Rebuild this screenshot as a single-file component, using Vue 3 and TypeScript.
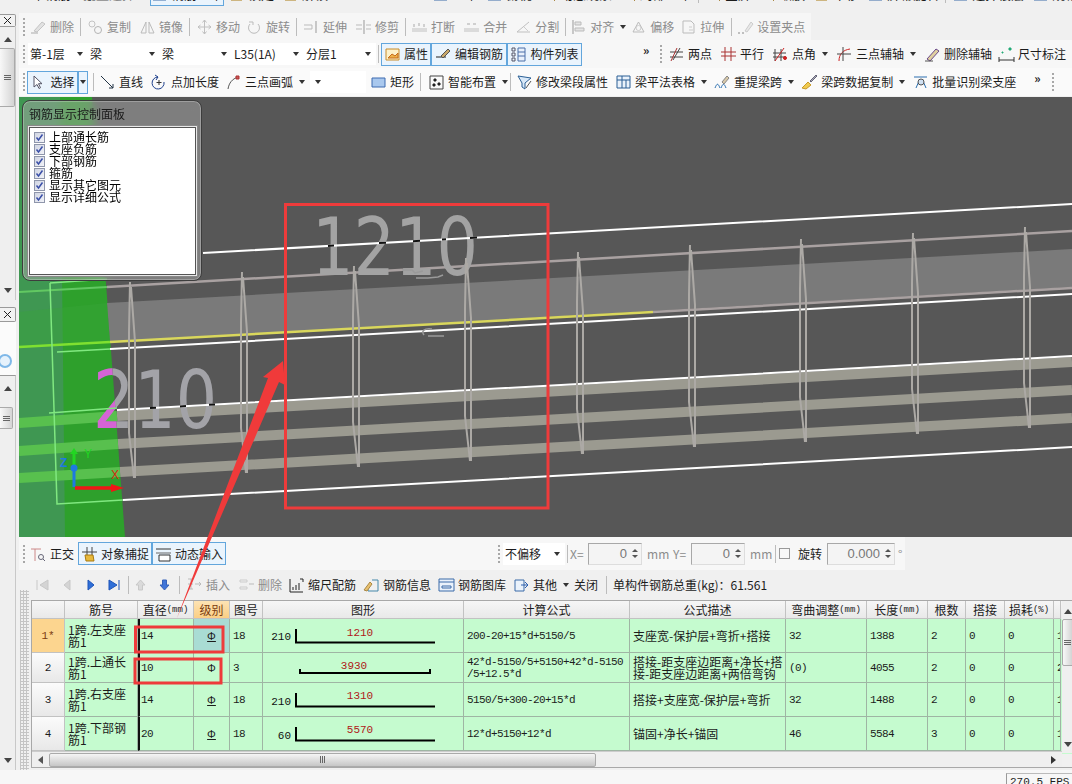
<script setup lang="ts">
type Shape = { d: string; s: string; f: string }
type Item = {
  k: 't' | 'tg' | 'sep' | 'grip' | 'sp' | 'sel' | 'more' | 'txt' | 'num' | 'chk' | 'nav'
  label?: string
  icon?: string
  caret?: boolean
  off?: boolean
  w?: number
}

const P = (d: string, s = '#777', f = 'none'): Shape => ({ d, s, f })
const ring = (x: number, y: number, r: number) => `M${x - r} ${y}a${r} ${r} 0 1 0 ${2 * r} 0a${r} ${r} 0 1 0 ${-2 * r} 0`

const icons: Record<string, Shape[]> = {
  erase: [P('M4 12 12 3l3 2-8 8z', '#c4c4c4', '#e2e2e2'), P('M1 14h7', '#aaa')],
  copy: [P(ring(5, 5, 3), '#c4c4c4'), P(ring(11, 11, 3.5), '#b4b4b4')],
  mirror: [P('M2 14 7 3v11z', '#bbb'), P('M15 14 10 3v11z', '#bbb')],
  move: [P('M8.5 1v14M2 8h13M8.5 1 6.5 3.5M8.5 1l2 2.5M8.5 15l-2-2.5M8.5 15l2-2.5M2 8l2.500-2M2 8l2.500 2M15 8l-2.500-2M15 8l-2.500 2', '#c0c0c0')],
  rotate: [P('M4 5a5.500 5.500 0 1 0 8 0', '#bbb'), P('M3 3h4v3', '#bbb')],
  extend: [P('M1 6h8v4H1', '#bbb'), P('M13 2v12', '#999')],
  trim: [P('M9 1v14', '#999'), P('M1 6h6M1 10h6M11 6h5M11 10h5', '#bbb')],
  breakk: [P('M1 10h15M1 12h15', '#c0c0c0'), P('M3 5v3M8 4v3M13 5v3', '#aaa')],
  merge: [P('M1 10h15M1 12h15', '#c0c0c0'), P('M4 5h3M10 5h3', '#aaa')],
  split: [P('M2 13 14 3M2 13h13', '#c0c0c0'), P('M9 8l4 4', '#ccc')],
  align: [P('M3 1v14', '#999'), P('M5 3h6v3H5zM5 9h9v3H5z', '#bbb', '#e4e4e4')],
  offset: [P('M3 13 8.500 3 14 13z', '#bbb'), P(ring(8.5, 9, 2.5), '#ccc')],
  stretch: [P('M3 2h8l3 3v9H3z', '#bbb'), P('M9 11h4M9 8h3', '#ccc')],
  grab: [P('M8 12 14 3l2 2-6 8z', '#ccc', '#e8e8e8'), P('M1 14h2M5 14h2', '#888')],
  attr: [P('M2 3h13v11H2z', '#c98c2a', '#fdf1c8'), P('M4 12l4-4 3 2 3-3v5z', '#c46a1a', '#eeb24a')],
  rebar: [P('M1 11h10', '#222'), P('M6 10 13 3l2 2-7 7z', '#555', '#c9a86a')],
  list: [P('M2 2h3v3H2zM2 7h3v3H2zM2 12h3v3H2z', '#556'), P('M8 2h7v13H8zM8 6h7M8 10h7', '#4a6fa8', '#e9f1fb')],
  two: [P('M2 11h13M2 6h13M5 14 12 2', '#444'), P('M9 2l-6 13', '#a33')],
  para: [P('M5 1v14M11 1v14M1 6h15M1 10h15', '#a33')],
  angle: [P('M3 3v12M9 3v12M1 7h13M1 11h13', '#444'), P('M3 15 12 2', '#c22'), P(ring(13, 12, 1.5), '#c22', '#c22')],
  arc3: [P('M3 15C3 8 7 4 14 3', '#c22'), P('M1 8h14M7 1v14', '#444')],
  delAxis: [P('M3 13 12 3l3 2-9 10z', '#6a4a8a', '#e0d0a0'), P('M1 15h8', '#555')],
  dim: [P('M1 14h15M1 11v5M16 11v5', '#333'), P('M4 6h1v1H4zM11 2h2v2h-2z', '#2a7', '#2a7')],
  cursor: [P('M4 2v11l3-2.500 2 4 1.500-.8-2-4H12z', '#556', '#fff')],
  line: [P('M2 2 14 14', '#234'), P('M14 14h-4M14 14v-4', '#234')],
  addLen: [P('M7 3a6 6 0 1 0 6 5', '#1d3f8c'), P('M8 6v5M5.500 8.500h5', '#333'), P('M4 1l3 2-2 3', '#1d3f8c')],
  arc: [P('M3 15C4 9 7 5 13 3', '#555'), P('M11 2h3v3h-3z', '#a33', '#c55')],
  rect: [P('M2 4h13v9H2z', '#3d6bb0', '#a9c8ee')],
  smart: [P('M2 2h13v13H2z', '#444'), P('M6 5h2v2H6zM10 9h2v2h-2zM5 10h2v2H5z', '#222', '#222')],
  beamAttr: [P('M2 2 15 4 9 9v6L6 13V9z', '#2a5f95', '#d8e8f8'), P('M10 14l5-7', '#555')],
  table: [P('M2 2h13v12H2z', '#2a5f95', '#eaf2fb'), P('M2 6h13M7 2v12M11 6v8', '#2a5f95')],
  respan: [P('M1 14c2-5 3-5 5 0M7 14c2-5 3-5 5 0', '#2a6fb0'), P('M8 8l5-6 2 2-5 6z', '#888', '#d8c8a8')],
  brush: [P('M1 14 7 8l3 3-5 4z', '#c89a2a', '#f0cb50'), P('M9 7l6-6 1 1-6 6z', '#667', '#aab')],
  batch: [P('M2 3h13', '#2a6fb0'), P('M4 14l3-7h4l3 7', '#2a6fb0'), P(ring(9, 8, 3), '#555', '#cfe0f2')],
  ortho: [P('M1 3h10M5 3v12', '#c88', 'none'), P(ring(11, 11, 2.5), '#667'), P('M13 13l2 2', '#667')],
  snap: [P('M1 6h15M6 1v8M11 1v8', '#444'), P('M4 9h8l1 6H5z', '#a97a10', '#e8b93c')],
  dyn: [P('M1 3h15', '#333'), P('M1 7h15', '#666'), P('M4 9h11v6H4z', '#333', '#fff')],
  first: [P('M3 3v10', '#c8c8c8'), P('M14 3v10L6 8z', '#c8c8c8', '#d4d4d4')],
  prev: [P('M12 3v10L6 8z', '#c8c8c8', '#d4d4d4')],
  next: [P('M6 3v10l6-5z', '#1f55b8', '#2f6fd8')],
  last: [P('M3 3v10l8-5z', '#1f55b8', '#2f6fd8'), P('M13 3v10', '#1f55b8')],
  up: [P('M8.500 3 13 8h-2.500v5h-4V8H4z', '#c8c8c8', '#dadada')],
  down: [P('M8.500 13 13 8h-2.500V3h-4v5H4z', '#3560b8', '#3f74d8')],
  ins: [P('M2 2h5M2 7h5M2 12h5M5 2v10', '#bbb'), P('M9 7h6M13 5l2 2-2 2', '#bbb')],
  rem: [P('M2 3h7v2H2zM2 10h7v2H2z', '#ccc'), P('M11 7h5', '#bbb')],
  scale: [P('M2 2v13h13', '#222'), P('M5 13v-3M8 13V8M11 13V6M12 2h3v3', '#222')],
  info: [P('M9 3h6v11H5v-4', '#48a'), P('M1 13 7 5l2 2-5 7z', '#a84', '#e8c070')],
  lib: [P('M1 2h15v12H1z', '#3a6aa8', '#eaf2fb'), P('M1 5h15M4 9h9v2H4z', '#3a6aa8')],
  other: [P('M2 3h9v11H2z', '#3a6aa8', '#eaf2fb'), P('M8 8h7M12 5l3 3-3 3', '#2a5fb0')],
  blue: [P('M2 3h13v11H2z', '#3a6aa8', '#9dc0ea')],
  look: [P(ring(7, 7, 5), '#2a6fb0', '#cfe6fa'), P('M11 11l4 4', '#a84')],
  lock: [P('M3 7h11v7H3z', '#a97a10', '#f0c84a'), P('M5 7V4h7v3', '#888')],
}

const t = (label: string, icon: string, caret = false, off = false): Item => ({ k: 't', label, icon, caret, off })
const tg = (label: string, icon: string, w: number): Item => ({ k: 'tg', label, icon, w })
const sp = (w: number): Item => ({ k: 'sp', w })
const sel = (label: string, w: number): Item => ({ k: 'sel', label, w })
const txt = (label: string, w: number, off = false): Item => ({ k: 'txt', label, w, off })
const num = (label: string, w: number): Item => ({ k: 'num', label, w })
const nav = (icon: string): Item => ({ k: 'nav', icon })
const sep: Item = { k: 'sep' }
const grip: Item = { k: 'grip' }
const more: Item = { k: 'more' }

const bars: { id: string; items: Item[] }[] = [
  {
    id: 'stub',
    items: [
      txt('三维钢筋显示', 60), sp(4), txt('批量选择', 64, true), sp(3), tg('钢筋三维', 'blue', 74),
      t('锁定', 'lock'), t('解锁', 'lock'), sp(96), t('二维', 'blue'), t('俯视', 'blue'),
      t('动态观察', 'look'), t('局部三维', 'look'), sep, t('全屏', 'look'), t('缩放', 'look'), t('平移', 'lock'), t('屏幕旋转', 'blue'), sep, t('选择楼层', 'blue'), t('规格', 'blue'),
    ],
  },
  {
    id: 'a',
    items: [
      grip, t('删除', 'erase'), sep, t('复制', 'copy'), t('镜像', 'mirror'), sep, t('移动', 'move'), sp(-2), t('旋转', 'rotate'), sep,
      t('延伸', 'extend'), t('修剪', 'trim'), sep, sp(-1), t('打断', 'breakk'), t('合并', 'merge'), t('分割', 'split'), sep, sp(-2),
      t('对齐', 'align', true), sp(-4), t('偏移', 'offset'), sp(-2), t('拉伸', 'stretch'), sp(1), sep, sp(-1), t('设置夹点', 'grab'),
    ],
  },
  {
    id: 'b',
    items: [
      grip, sp(2), sel('第-1层', 60), sel('梁', 72), sel('梁', 72), sel('L35(1A)', 72), sel('分层1', 72), sep,
      tg('属性', 'attr', 50), tg('编辑钢筋', 'rebar', 76), tg('构件列表', 'list', 75), sp(61), more, sp(8), grip, sp(1),
      t('两点', 'two'), t('平行', 'para'), t('点角', 'angle', true), t('三点辅轴', 'arc3', true), t('删除辅轴', 'delAxis'), sp(-2), t('尺寸标注', 'dim', true),
    ],
  },
  {
    id: 'c',
    items: [
      grip, sp(1), tg('选择', 'cursor', 51), { k: 'tg', w: 10, caret: true }, sp(3), sep, sp(-1), t('直线', 'line'), t('点加长度', 'addLen'), sp(-2), t('三点画弧', 'arc', true),
      sp(1), sel('', 56), t('矩形', 'rect'), sep, sp(1), t('智能布置', 'smart', true), sp(-4), sep, sp(-1), t('修改梁段属性', 'beamAttr'), sp(-1),
      t('梁平法表格', 'table', true), sp(-1), t('重提梁跨', 'respan', true), sp(-1), t('梁跨数据复制', 'brush', true), sp(-1), t('批量识别梁支座', 'batch'), sp(14), more, sp(9), grip,
    ],
  },
  {
    id: 'snap',
    items: [
      grip, t('正交', 'ortho'), tg('对象捕捉', 'snap', 74), tg('动态输入', 'dyn', 74), sp(272), grip, sp(2), sel('不偏移', 62), sep,
      txt('X=', 15, true), sp(3), num('0', 54), sp(5), txt('mm', 20, true), sp(6), txt('Y=', 15, true), sp(3), num('0', 54), sp(5), txt('mm', 20, true), sp(3), sep,
      sp(1), { k: 'chk' }, sp(8), txt('旋转', 24), sp(5), num('0.000', 68), sp(3), txt('°', 5, true),
    ],
  },
  {
    id: 'tools',
    items: [
      sp(-1), nav('first'), nav('prev'), nav('next'), nav('last'), sep, sp(-3), nav('up'), nav('down'), sp(1), sep,
      t('插入', 'ins', false, true), t('删除', 'rem', false, true), sp(-2), t('缩尺配筋', 'scale'), sp(-1), t('钢筋信息', 'info'), sp(-1), t('钢筋图库', 'lib'), sp(-1), t('其他', 'other', true), sp(1),
      txt('关闭', 28), sp(2), sep, sp(4), txt('单构件钢筋总重(kg)：61.561', 160),
    ],
  },
]

const panelItems = ['上部通长筋', '支座负筋', '下部钢筋', '箍筋', '显示其它图元', '显示详细公式']

const stirrups = [
  [130, 282, 478], [242, 272, 473], [354, 266, 467], [466, 258, 461], [578, 252, 454],
  [690, 245, 447], [801, 239, 442], [913, 233, 434], [1025, 227, 428],
].map(([x, a, b]) => `M${x} ${a}L${x - 1} ${a + 50}L${x - 1} ${b - 45}L${x + 4} ${b}M${x + 1} ${a + 5}L${x + 5} ${a + 60}L${x + 5} ${b}`)

const rows = [
  { no: '1*', h: 34, name: ['1跨.左支座', '筋1'], dia: '14', grade: 3, fig: '18', bend: '210', label: '1210', calc: ['200-20+15*d+5150/5'], desc: ['支座宽-保护层+弯折+搭接'], adj: '32', len: '1388', cnt: '2', last: '1' },
  { no: '2', h: 30, name: ['1跨.上通长', '筋1'], dia: '10', grade: 1, fig: '3', bend: '', label: '3930', calc: ['42*d-5150/5+5150+42*d-5150', '/5+12.5*d'], desc: ['搭接-距支座边距离+净长+搭', '接-距支座边距离+两倍弯钩'], adj: '(0)', len: '4055', cnt: '2', last: '2' },
  { no: '3', h: 34, name: ['1跨.右支座', '筋1'], dia: '14', grade: 3, fig: '18', bend: '210', label: '1310', calc: ['5150/5+300-20+15*d'], desc: ['搭接+支座宽-保护层+弯折'], adj: '32', len: '1488', cnt: '2', last: '1' },
  { no: '4', h: 34, name: ['1跨.下部钢', '筋1'], dia: '20', grade: 3, fig: '18', bend: '60', label: '5570', calc: ['12*d+5150+12*d'], desc: ['锚固+净长+锚固'], adj: '46', len: '5584', cnt: '3', last: '1' },
]
</script>

<template>
  <div class="app">
    <div class="body">
      <aside class="side">
        <button class="close first-close"><svg width="9" height="9" viewBox="0 0 9 9"><path d="M1 1l7 7M8 1 1 8" stroke="#222" fill="none" /></svg></button>
        <div class="pane upper">
          <i class="arrow-up"></i>
          <div class="thumb upper-thumb"><b></b><b></b><b></b></div>
          <i class="arrow-down"></i>
        </div>
        <button class="close"><svg width="9" height="9" viewBox="0 0 9 9"><path d="M1 1l7 7M8 1 1 8" stroke="#222" fill="none" /></svg></button>
        <div class="blank"><span class="halo"></span></div>
        <div class="pane lower">
          <i class="arrow-up"></i>
          <div class="thumb lower-thumb"><b></b><b></b><b></b></div>
          <i class="arrow-down"></i>
        </div>
      </aside>

      <main class="main">
        <template v-for="bar in bars" :key="bar.id">
          <div class="bar" :class="'bar-' + bar.id">
            <div class="strip">
              <template v-for="(it, i) in bar.items" :key="i">
                <span v-if="it.k === 'grip'" class="grip"></span>
                <span v-else-if="it.k === 'sep'" class="sep"></span>
                <span v-else-if="it.k === 'sp'" class="sp" :style="{ marginLeft: it.w + 'px' }"></span>
                <span v-else-if="it.k === 'more'" class="more">»</span>
                <span v-else-if="it.k === 'chk'" class="mini-check"></span>
                <span v-else-if="it.k === 'sel'" class="sel" :style="{ width: it.w + 'px' }">{{ it.label }}<i class="caret"></i></span>
                <span v-else-if="it.k === 'txt'" class="txt" :class="{ off: it.off }" :style="{ width: it.w + 'px' }">{{ it.label }}</span>
                <span v-else-if="it.k === 'num'" class="num" :style="{ width: it.w + 'px' }">
                  {{ it.label }}
                  <span class="spin"><i class="arrow-up tiny"></i><i class="arrow-down tiny"></i></span>
                </span>
                <span v-else-if="it.k === 'nav'" class="nav">
                  <svg class="ic" viewBox="0 0 17 16"><path v-for="(p, j) in icons[it.icon!]" :key="j" :d="p.d" :stroke="p.s" :fill="p.f" /></svg>
                </span>
                <span v-else :class="[it.k === 'tg' ? 'toggle' : 'tool', { off: it.off }]" :style="it.w ? { width: it.w + 'px' } : undefined">
                  <svg v-if="it.icon" class="ic" viewBox="0 0 17 16"><path v-for="(p, j) in icons[it.icon]" :key="j" :d="p.d" :stroke="p.s" :fill="p.f" /></svg>
                  <span v-if="it.label">{{ it.label }}</span>
                  <i v-if="it.caret" class="caret"></i>
                </span>
              </template>
            </div>
          </div>

          <div v-if="bar.id === 'c'" class="viewport">
            <svg class="scene" width="1053" height="440" viewBox="19 97 1053 440">
              <defs>
                <clipPath id="on-green"><path d="M19 97H92L125 537H19z" /></clipPath>
                <clipPath id="off-green"><path d="M92 97H1072V537H125z" /></clipPath>
              </defs>
              <path d="M19 97H92L125 537H19z" fill="#2ea02c" />
              <path d="M19 97H60L65 537H19z" fill="#3f9752" />
              <path d="M107 303 1072 249V287L110 342z" fill="#7a7a7a" />
              <path d="M19 312 107 303 110 342 19 347z" fill="#3aa53a" opacity=".4" />
              <g fill="none">
                <path d="M107 287 1072 231" stroke="#a9a1a1" stroke-width="2.500" />
                <path d="M653 312 1072 288" stroke="#a9a1a1" stroke-width="2.500" />
                <path d="M19 292 107 287" stroke="#62c862" stroke-width="2" />
                <path d="M117 416 1072 362M118 444 1072 390M120 472 1072 418" stroke="#9b9a90" stroke-width="10" />
                <path d="M19 423 117 416M19 451 118 444M19 478 120 472" stroke="#58c04e" stroke-width="10" />
              </g>
              <g font-family="'DejaVu Sans', sans-serif" font-size="80">
                <text x="312" y="275" textLength="166" lengthAdjust="spacingAndGlyphs" fill="#a3a3a3">1210</text>
                <text x="93" y="428" textLength="124" lengthAdjust="spacingAndGlyphs" fill="#a3a3a8" clip-path="url(#off-green)">210</text>
                <text x="93" y="428" textLength="124" lengthAdjust="spacingAndGlyphs" fill="#d564d5" clip-path="url(#on-green)">210</text>
              </g>
              <g fill="none">
                <path d="M203 253 1072 204M110 349 1072 294M117 410 1072 356M123 500 1072 447" stroke="#fff" stroke-width="2" />
                <path d="M328 246 334 245.600M379 243 386 242.700M413 241.200 420 240.800M442 239.500 446 239.300M470 237.900 477 237.500M150 408.100 156 407.800M180 406.400 186 406.100M209 404.800 215 404.500" stroke="#111" stroke-width="2" />
                <path d="M110 342 653 312" stroke="#d9d75c" stroke-width="2.500" />
                <path d="M19 347 110 342" stroke="#7fe030" stroke-width="2.500" />
                <path d="M50 283 57 504 123 500M57 352 110 349M49 413 117 408M50 283 107 279" stroke="#80e880" stroke-width="1.500" />
                <path d="M402 270h10l3 3 8-2M416 278h12l10-1 5-2M424 335c-3-4 0-7 8-6M428 336h16" stroke="#9a9a9a" stroke-width="1.500" />
                <path v-for="(d, i) in stirrups" :key="i" :d="d" stroke="#aca9a5" stroke-width="2" />
                <path d="M74 487V468" stroke="#1e7ae0" stroke-width="3" />
                <path d="M74 468V452" stroke="#22d622" stroke-width="3" />
                <path d="M75 488H112" stroke="#f01616" stroke-width="3.500" />
              </g>
              <circle cx="74" cy="468" r="3.500" fill="#1e7ae0" />
              <path d="M74 448 70 454H78z" fill="#22d622" />
              <path d="M124 488 111 484V492z" fill="#f01616" />
              <g font-family="'Liberation Sans', sans-serif" font-size="12">
                <text x="84" y="458" fill="#22d622">Y</text>
                <text x="60" y="467" fill="#1e7ae0" font-weight="700">Z</text>
                <text x="111" y="479" fill="#d42c10">X</text>
              </g>
            </svg>

            <div class="panel">
              <div class="panel-title">钢筋显示控制面板</div>
              <div class="panel-list">
                <label v-for="item in panelItems" :key="item" class="panel-item">
                  <span class="check"><svg width="9" height="9" viewBox="0 0 9 9"><path d="M1.500 4.500 3.500 7 7.500 1.500" fill="none" stroke="#3a4fa8" stroke-width="1.500" /></svg></span>
                  {{ item }}
                </label>
              </div>
            </div>
          </div>
        </template>

        <section class="grid-wrap">
          <div class="dots"></div>
          <div class="grid-box">
            <div class="row header" style="height: 18px">
              <div class="cell"></div>
              <div class="cell">筋号</div>
              <div class="cell">直径<small>(mm)</small></div>
              <div class="cell level">级别</div>
              <div class="cell">图号</div>
              <div class="cell">图形</div>
              <div class="cell">计算公式</div>
              <div class="cell">公式描述</div>
              <div class="cell">弯曲调整<small>(mm)</small></div>
              <div class="cell">长度<small>(mm)</small></div>
              <div class="cell">根数</div>
              <div class="cell">搭接</div>
              <div class="cell">损耗<small>(%)</small></div>
              <div class="cell"></div>
            </div>
            <div v-for="(r, i) in rows" :key="r.no" class="row" :style="{ height: r.h + 'px' }">
              <div class="cell no" :class="{ active: i === 0 }">{{ r.no }}</div>
              <div class="cell left wrap"><span v-for="l in r.name" :key="l">{{ l }}</span></div>
              <div class="cell left mono dia">{{ r.dia }}</div>
              <div class="cell grade" :class="{ picked: i === 0 }"><span :class="{ grade3: r.grade === 3 }">Φ</span></div>
              <div class="cell left mono">{{ r.fig }}</div>
              <div class="cell shape">
                <svg width="200" :height="r.h" :viewBox="`0 0 200 ${r.h}`">
                  <text v-if="r.bend" x="28" :y="i === 0 ? 21 : 22" text-anchor="end" class="bend">{{ r.bend }}</text>
                  <text :x="i === 1 ? 91 : 97" :y="i === 0 ? 17 : 16" text-anchor="middle" class="dim">{{ r.label }}</text>
                  <path v-if="i === 1" d="M37 16v4h130v-4" fill="none" stroke="#000" stroke-width="2" />
                  <path v-else d="M33 10v13.500H172" fill="none" stroke="#000" stroke-width="2" />
                </svg>
              </div>
              <div class="cell left mono wrap"><span v-for="l in r.calc" :key="l">{{ l }}</span></div>
              <div class="cell left wrap"><span v-for="l in r.desc" :key="l">{{ l }}</span></div>
              <div class="cell left mono">{{ r.adj }}</div>
              <div class="cell left mono">{{ r.len }}</div>
              <div class="cell left mono">{{ r.cnt }}</div>
              <div class="cell left mono">0</div>
              <div class="cell left mono">0</div>
              <div class="cell left mono">{{ r.last }}</div>
            </div>
            <div class="row" style="height: 3px">
              <div v-for="n in 14" :key="n" class="cell" :class="{ no: n === 1, dia: n === 3 }"></div>
            </div>
            <div class="hscroll">
              <i class="arrow-left"></i>
              <div class="hthumb"><b></b><b></b><b></b></div>
              <i class="arrow-right"></i>
            </div>
            <div class="vscroll">
              <i class="arrow-up"></i>
              <div class="vthumb"><b></b><b></b><b></b></div>
              <i class="arrow-down"></i>
            </div>
          </div>
        </section>
      </main>
    </div>

    <footer class="status"><span class="fps">270.5 FPS</span></footer>

    <svg class="marks" width="1072" height="784" viewBox="0 0 1072 784">
      <path d="M285.500 204.500H548V508H285.500z" fill="none" stroke="#ee3b3b" stroke-width="3" />
      <path d="M135.500 627H223V652H135.500zM135 659H221V683H135z" fill="none" stroke="#ee3b3b" stroke-width="3" />
      <path d="M283 361 285 385 279 382 177 618 268 378 263 377z" fill="#f03a3a" />
    </svg>
  </div>
</template>

<style scoped>
.app {
  position: relative;
  width: 1072px;
  height: 784px;
  overflow: hidden;
  display: flex;
  flex-direction: column;
  background: #f0f0f0;
  color: #1c1c1c;
  font: 12px/14px "Noto Sans CJK SC", "Liberation Sans", sans-serif;
}

.body {
  display: flex;
  height: 770px;
}

.side {
  width: 16px;
  margin-right: 3px;
  display: flex;
  flex-direction: column;
  flex: none;
}

.close {
  flex: none;
  height: 15px;
  padding: 0;
  display: flex;
  align-items: center;
  justify-content: center;
  background: #f2f2f2;
  border: 1px solid #9a9a9a;
  border-left: 0;
  border-radius: 0 2px 2px 0;
}

.first-close {
  margin-top: 14px;
  height: 13px;
}

.pane {
  display: flex;
  flex-direction: column;
  align-items: center;
  background: #efefef;
  border-right: 1px solid #c8c8c8;
  padding: 10px 0 7px;
}

.upper {
  height: 273px;
  box-sizing: border-box;
  margin-bottom: 7px;
}

.lower {
  flex: 1;
  border-top: 1px solid #999;
}

.arrow-up,
.arrow-down {
  width: 0;
  height: 0;
  border: 4px solid transparent;
  flex: none;
}

.arrow-up {
  border-bottom: 5px solid #444;
  border-top-width: 0;
}

.arrow-down {
  border-top: 5px solid #444;
  border-bottom-width: 0;
  margin-top: auto;
}

.tiny {
  border-width: 3px;
  margin: 0;
}

.arrow-up.tiny {
  border-top-width: 0;
  border-bottom: 3px solid #555;
}

.arrow-down.tiny {
  border-bottom-width: 0;
  border-top: 3px solid #555;
}

.thumb,
.vthumb {
  width: 100%;
  background: linear-gradient(90deg, #f8f8f8, #d4d4d4);
  border: 1px solid #aaa;
  border-left: 0;
  border-radius: 0 2px 2px 0;
  display: flex;
  flex-direction: column;
  align-items: center;
  justify-content: center;
  gap: 1px;
  box-sizing: border-box;
}

.thumb b,
.vthumb b {
  display: block;
  width: 7px;
  height: 1px;
  background: #666;
}

.upper-thumb {
  height: 59px;
  margin-top: 6px;
}

.lower-thumb {
  height: 22px;
  margin-top: 16px;
  width: 13px;
  align-self: flex-start;
}

.blank {
  height: 53px;
  flex: none;
  background: #fbfbfb;
  box-sizing: border-box;
  padding-top: 32px;
  overflow: hidden;
}

.halo {
  display: block;
  width: 10px;
  height: 10px;
  margin-left: -2px;
  border-radius: 50%;
  border: 2px solid #7fb8e8;
  background: #e6f2fc;
}

.main {
  width: 1053px;
  display: flex;
  flex-direction: column;
}

.bar {
  flex: none;
  overflow: hidden;
}

.strip {
  display: flex;
  align-items: center;
  height: 100%;
  white-space: nowrap;
  padding-left: 4px;
  box-sizing: border-box;
}

.bar-stub {
  height: 10px;
  margin-bottom: 3px;
}

.bar-stub .strip {
  height: 20px;
  margin-top: -16px;
  padding-left: 0;
  font-size: 13px;
}

.bar-a {
  height: 27px;
}

.bar-a .strip {
  width: 792px;
  background: #f6f6f6;
  color: #8c8c8c;
}

.bar-b {
  height: 28px;
}

.bar-b .strip {
  background: #f7f7f7;
}

.bar-c {
  height: 28px;
  margin-bottom: 1px;
}

.bar-c .strip {
  background: #fafafa;
}

.bar-snap {
  height: 33px;
}

.bar-snap .strip {
  width: 886px;
  background: #f7f7f7;
}

.bar-tools {
  height: 30px;
  margin-left: 12px;
}

.bar-tools .strip {
  padding-left: 0;
}

.grip {
  flex: none;
  width: 2px;
  height: 18px;
  margin-right: 1px;
  background: repeating-linear-gradient(#a8a8a8 0 2px, transparent 2px 4px);
}

.sep {
  flex: none;
  width: 1px;
  height: 18px;
  margin: 0 2px;
  background: #bcbcbc;
}

.sp {
  flex: none;
  width: 0;
}

.more {
  flex: none;
  width: 9px;
  margin-top: -8px;
  font-size: 12px;
  font-weight: 700;
  line-height: 12px;
}

.tool {
  flex: none;
  display: flex;
  align-items: center;
  gap: 3px;
  padding: 0 4px;
}

.tool.off {
  color: #8c8c8c;
}

.toggle {
  flex: none;
  height: 23px;
  box-sizing: border-box;
  display: flex;
  align-items: center;
  justify-content: center;
  gap: 3px;
  background: #eaf4fd;
  border: 1px solid #63a6dc;
}

.ic {
  flex: none;
  width: 17px;
  height: 16px;
}

.caret {
  flex: none;
  width: 0;
  height: 0;
  margin-left: 3px;
  border: 3px solid transparent;
  border-top: 4px solid #333;
  border-bottom-width: 0;
}

.toggle .caret {
  margin-left: 0;
}

.tool .caret {
  margin: 0 0 0 3px;
}

.sel {
  flex: none;
  height: 22px;
  padding-left: 2px;
  box-sizing: border-box;
  display: flex;
  align-items: center;
  justify-content: space-between;
  padding-right: 5px;
  background: #fff;
}

.txt {
  flex: none;
  overflow: visible;
}

.txt.off {
  color: #8c8c8c;
}

.num {
  flex: none;
  height: 22px;
  box-sizing: border-box;
  display: flex;
  align-items: center;
  justify-content: flex-end;
  gap: 5px;
  padding-right: 3px;
  background: #f4f4f4;
  color: #777;
  border: 1px solid #a8a8a8;
  border-right-color: #ddd;
  border-bottom-color: #ddd;
  font-family: "Liberation Sans", sans-serif;
  font-size: 13px;
}

.spin {
  display: flex;
  flex-direction: column;
  gap: 3px;
}

.mini-check {
  flex: none;
  width: 11px;
  height: 11px;
  box-sizing: border-box;
  border: 1px solid #999;
  background: #f8f8f8;
}

.nav {
  flex: none;
  width: 24px;
  display: flex;
  justify-content: center;
}

.viewport {
  position: relative;
  flex: none;
  height: 440px;
  background: #575757;
}

.scene {
  display: block;
}

.panel {
  position: absolute;
  left: 3px;
  top: 3px;
  width: 180px;
  height: 181px;
  box-sizing: border-box;
  padding: 4px 5px 5px 6px;
  border: 1px solid #3d3d3d;
  border-radius: 8px;
  background: rgba(165, 165, 165, 0.5);
  box-shadow: inset 0 0 0 1px rgba(255, 255, 255, 0.25);
  backdrop-filter: blur(5px);
  display: flex;
  flex-direction: column;
}

.panel-title {
  flex: none;
  height: 18px;
  line-height: 18px;
  color: #1a1a1a;
}

.panel-list {
  flex: 1;
  margin-top: 4px;
  padding: 3px 0 0 4px;
  background: #fff;
  border: 1px solid #555;
  outline: 1px solid #e8e8e8;
  box-shadow: 0 0 0 2px #888;
  color: #000;
}

.panel-item {
  display: flex;
  align-items: center;
  gap: 4px;
  height: 12px;
  line-height: 12px;
  white-space: nowrap;
}

.check {
  flex: none;
  width: 11px;
  height: 11px;
  box-sizing: border-box;
  display: flex;
  align-items: center;
  justify-content: center;
  background: linear-gradient(135deg, #cfd4e2, #f2f3f8);
  border: 1px solid #8f96ab;
}

.grid-wrap {
  flex: 1;
  display: flex;
  min-height: 0;
}

.dots {
  flex: none;
  width: 12px;
  margin-top: -10px;
  background: radial-gradient(circle, #c4c4c4 1px, transparent 1.2px) 0 0 / 3px 3px;
  background-clip: content-box;
  padding: 0 2px 0 1px;
  box-sizing: border-box;
}

.grid-box {
  position: relative;
  width: 1041px;
  height: 168px;
  box-sizing: border-box;
  border: 1px solid #a8a8a8;
  border-right: 0;
  background: #f0f0f0;
  overflow: hidden;
}

.row {
  display: grid;
  grid-template-columns: 33px 73px 56px 36px 33px 201px 166px 156px 81px 61px 38px 39px 49px 7px;
  background: #c5fbcf;
}

.header {
  background: linear-gradient(#f6f6f6, #e8e8e8);
}

.cell {
  box-sizing: border-box;
  display: flex;
  align-items: center;
  justify-content: center;
  min-width: 0;
  overflow: hidden;
  white-space: nowrap;
  border-right: 1px solid #9fb5a4;
  border-bottom: 1px solid #9fb5a4;
}

.header .cell {
  border-color: #c2c2c2;
}

.header small {
  font: 9px "Liberation Mono", monospace;
}

.header .level {
  background: linear-gradient(#fde3b4, #fbcf85);
  color: #7a3b10;
}

.no {
  background: linear-gradient(#fbfbfb, #e8e8e8);
  font: 11px "Liberation Mono", monospace;
  border-color: #c2c2c2;
}

.no.active {
  background: #fcd58f;
  color: #7a3b10;
}

.left {
  justify-content: flex-start;
  padding-left: 3px;
}

.wrap {
  flex-direction: column;
  align-items: flex-start;
  justify-content: center;
  line-height: 12px;
}

.mono {
  font-family: "Liberation Mono", monospace;
  font-size: 11px;
  letter-spacing: -0.6px;
}

.dia {
  border-left: 2px solid #111;
  padding-left: 1px;
}

.grade {
  font-family: "Liberation Sans", sans-serif;
  font-size: 11px;
}

.picked {
  background: #a9dcd4;
}

.grade3 {
  text-decoration: underline;
  text-underline-offset: 1px;
}

.shape svg {
  display: block;
}

.bend {
  font: 11px "Liberation Mono", monospace;
  fill: #111;
}

.dim {
  font: 11px "Liberation Mono", monospace;
  fill: #b01818;
}

.hscroll {
  position: absolute;
  left: 0;
  bottom: 0;
  width: 1030px;
  height: 15px;
  display: flex;
  align-items: center;
  background: #efefef;
  border-top: 1px solid #ccc;
}

.arrow-left,
.arrow-right {
  flex: none;
  width: 0;
  height: 0;
  border: 4px solid transparent;
}

.arrow-left {
  border-right: 5px solid #555;
  border-left-width: 0;
  margin-left: 6px;
}

.arrow-right {
  border-left: 5px solid #333;
  border-right-width: 0;
  margin-left: auto;
  margin-right: 6px;
}

.hthumb {
  width: 547px;
  height: 14px;
  margin-left: 6px;
  display: flex;
  align-items: center;
  justify-content: center;
  gap: 1px;
  box-sizing: border-box;
  background: linear-gradient(#f5f5f5, #c6c6c6);
  border: 1px solid #aaa;
  border-radius: 2px;
}

.hthumb b {
  width: 1px;
  height: 7px;
  background: #666;
}

.vscroll {
  position: absolute;
  left: 1030px;
  top: 0;
  width: 11px;
  height: 152px;
  padding-top: 8px;
  box-sizing: border-box;
  display: flex;
  flex-direction: column;
  align-items: center;
  background: #efefef;
}

.vscroll .arrow-up {
  flex: none;
}

.vscroll .arrow-down {
  margin-bottom: 6px;
}

.vthumb {
  height: 47px;
  margin-top: 5px;
  border-left: 1px solid #aaa;
  border-radius: 2px 0 0 2px;
}

.status {
  flex: none;
  height: 14px;
  display: flex;
  justify-content: flex-end;
  box-sizing: border-box;
  padding-top: 3px;
  background: #f7f7f7;
}

.fps {
  width: 62px;
  padding: 2px 0 0 3px;
  border-left: 1px solid #999;
  border-top: 1px solid #bbb;
  font: 11px/12px "Liberation Mono", monospace;
  white-space: nowrap;
}

.marks {
  position: absolute;
  left: 0;
  top: 0;
  pointer-events: none;
}
</style>

<style>
html,
body {
  margin: 0;
  background: #f0f0f0;
}
</style>
